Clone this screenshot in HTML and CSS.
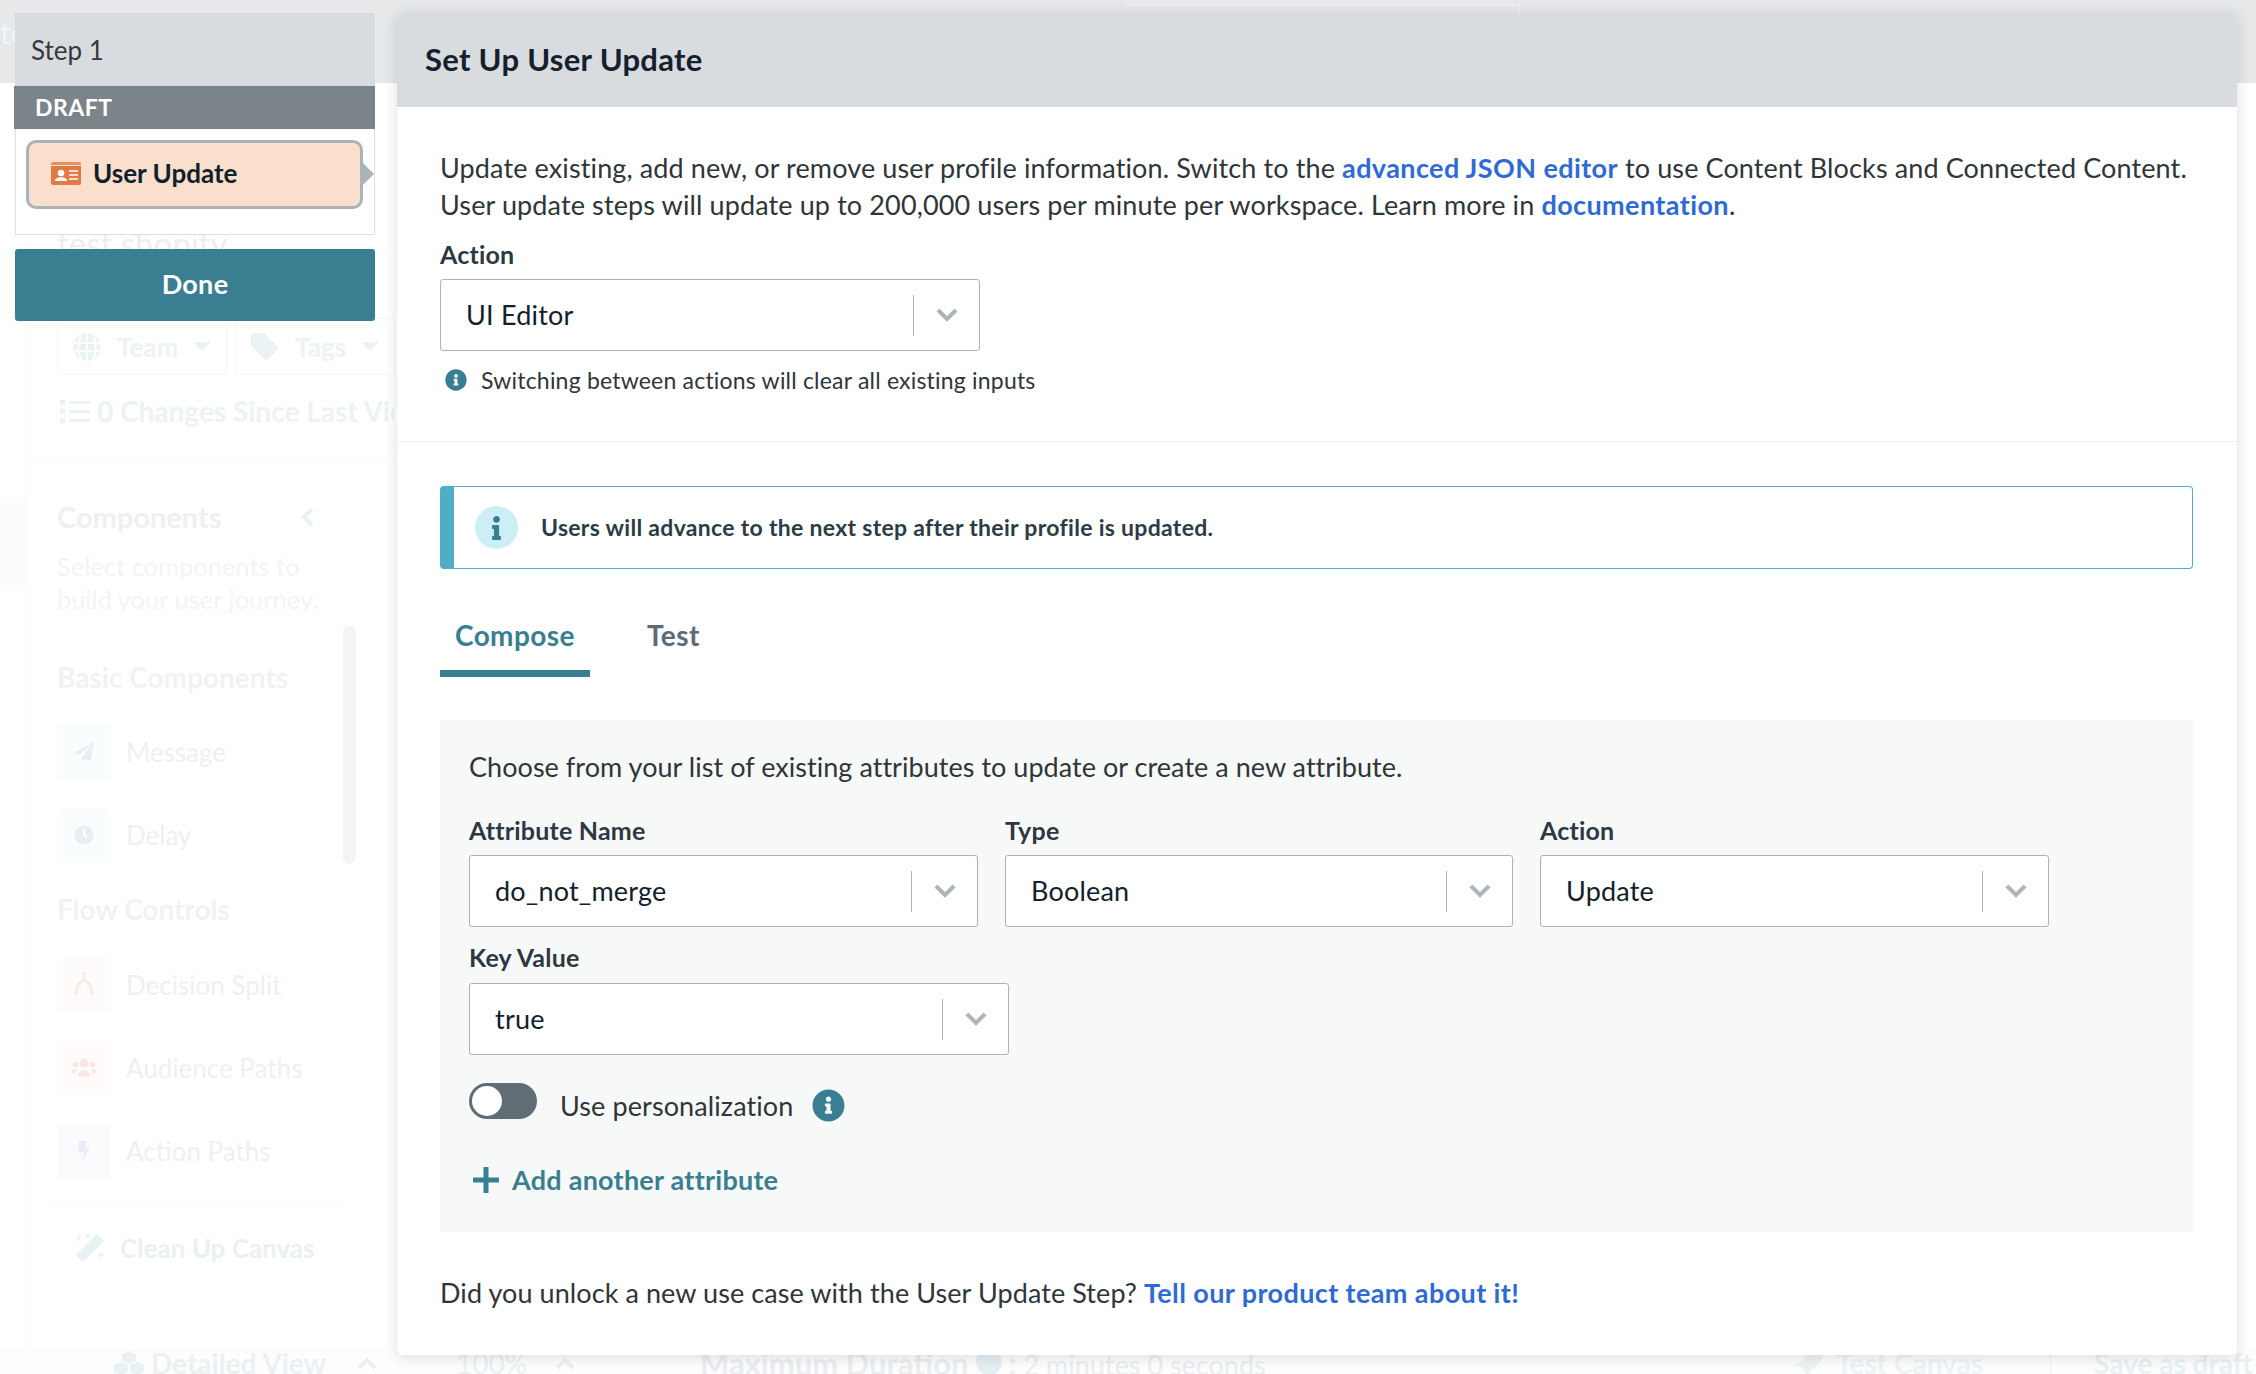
FILE: index.html
```html
<!DOCTYPE html>
<html lang="en">
  <head>
    <title>Set Up User Update</title>
    <meta charset="UTF-8" />
    <link rel="stylesheet" href="styles.css">
  </head>
  <body>
    <!-- faded canvas behind the modal -->
    <div class="page">
      <div class="topbar">
        <span class="topbar-text">to</span>
        <div class="topbar-tab"></div>
      </div>
      <div class="workspace">
        <div class="rail"><div class="rail-mark"></div></div>
        <div class="sidebar">
          <div class="side-head">
            <div class="side-name">test shopify</div>
            <div class="filters">
              <div class="filter filter-team">
                <svg class="filter-icon" viewBox="0 0 24 24"><circle cx="12" cy="12" r="12"/><path d="M0 8.500h24M0 15.500h24M12 0v24M7 1c-3 7-3 15 0 22M17 1c3 7 3 15 0 22" stroke="#fff" stroke-width="1.500" fill="none"/></svg>
                <span>Team</span><i class="caret"></i>
              </div>
              <div class="filter filter-tags">
                <svg class="filter-icon" viewBox="0 0 24 24"><path d="M0 2a2 2 0 0 1 2-2h9l13 13-11 11L0 11z"/></svg>
                <span>Tags</span><i class="caret"></i>
              </div>
            </div>
            <div class="changes">
              <svg class="list-icon" viewBox="0 0 30 24"><path d="M0 1h5v5H0zM0 10h5v5H0zM0 19h5v5H0zM9 2h21v3H9zM9 11h21v3H9zM9 20h21v3H9z"/></svg>
              <span>0 Changes Since Last View</span>
            </div>
          </div>
          <div class="components">
            <div class="comp-title">
              <span>Components</span>
              <svg class="comp-back" viewBox="0 0 14 20"><path d="M11 2 3 10l8 8" fill="none" stroke-width="4"/></svg>
            </div>
            <p class="comp-desc">Select components to<br>build your user journey.</p>
            <div class="comp-scrollbar"></div>
            <h3 class="comp-group">Basic Components</h3>
            <div class="comp-item">
              <div class="tile tile-teal"><svg viewBox="0 0 20 20"><path d="M20 0 17 19l-6-2-3 3v-5L18 3 5 13 0 11z" fill="#e6f0f2"/></svg></div>
              <span>Message</span>
            </div>
            <div class="comp-item">
              <div class="tile tile-teal"><svg viewBox="0 0 20 20"><circle cx="10" cy="10" r="9.500" fill="#e6f0f2"/><path d="M10 4v6l3 3" stroke="#fff" stroke-width="2" fill="none"/></svg></div>
              <span>Delay</span>
            </div>
            <h3 class="comp-group comp-group-flow">Flow Controls</h3>
            <div class="comp-item">
              <div class="tile tile-red"><svg class="icon-split" viewBox="0 0 20 26"><path d="M10 0v8M10 8c-5 2-8 6-8 15M10 8c5 2 8 6 8 15" stroke="#fae6e6" stroke-width="2.500" fill="none"/></svg></div>
              <span>Decision Split</span>
            </div>
            <div class="comp-item">
              <div class="tile tile-orange"><svg class="icon-users" viewBox="0 0 24 18"><circle cx="12" cy="4.500" r="4" fill="#fae6e6"/><circle cx="4" cy="6" r="2.500" fill="#fae6e6"/><circle cx="20" cy="6" r="2.500" fill="#fae6e6"/><path d="M6 17c0-8 12-8 12 0zM0 13c0-3 4-4 5-3l-1 4zM24 13c0-3-4-4-5-3l1 4z" fill="#fae6e6"/></svg></div>
              <span>Audience Paths</span>
            </div>
            <div class="comp-item">
              <div class="tile tile-blue"><svg viewBox="0 0 14 20"><path d="M2 0h8L8 7h5L5 20l2-9H1z" fill="#eaecf6"/></svg></div>
              <span>Action Paths</span>
            </div>
            <div class="cleanup">
              <svg class="wand" viewBox="0 0 30 30"><path d="M22 1 29 8 8 29 1 22z" fill="#e8f1f3"/><path d="M4 1l1 3 3 1-3 1-1 3-1-3-3-1 3-1zM26 18l1 3 3 1-3 1-1 3-1-3-3-1 3-1zM13 0l1 2 2 1-2 1-1 2-1-2-2-1 2-1z" fill="#e8f1f3"/></svg>
              <span>Clean Up Canvas</span>
            </div>
          </div>
        </div>
      </div>
      <div class="footer">
        <div class="detailed">
          <svg class="cubes" viewBox="0 0 30 24"><path d="M15 0l7 3v7l-7 3-7-3V3zM7 11l7 3v7l-7 3-7-3v-7zM23 11l7 3v7l-7 3-7-3v-7z" fill="#e8f1f3"/></svg>
          <span>Detailed View</span>
          <svg class="chev-up" viewBox="0 0 20 14"><path d="M2 12 10 4l8 8" fill="none" stroke-width="4"/></svg>
        </div>
        <div class="zoom-level">
          <span>100%</span>
          <svg class="chev-up" viewBox="0 0 20 14"><path d="M2 12 10 4l8 8" fill="none" stroke-width="4"/></svg>
        </div>
        <div class="duration"><b>Maximum Duration</b><i class="dot"></i><b>:</b> 2 minutes 0 seconds</div>
        <div class="footer-actions">
          <svg class="rocket" viewBox="0 0 30 30"><path d="M30 0c-10 0-17 4-22 13l-8 3 6 3 5 5 3 6 3-8C26 17 30 10 30 0z" fill="#eef4f5"/></svg>
          <b class="test-canvas">Test Canvas</b>
          <b class="save-draft">Save as draft</b>
        </div>
      </div>
    </div>

    <!-- step node, sits above the overlay -->
    <div class="step">
      <div class="step-head">Step 1</div>
      <div class="step-draft">DRAFT</div>
      <div class="step-body">
        <div class="node">
          <svg class="node-icon" viewBox="0 0 30 23">
            <path d="M2 0h26a2 2 0 0 1 2 2v1H0V2a2 2 0 0 1 2-2z" fill="#e8905f"/>
            <path d="M0 4h30v17a2 2 0 0 1-2 2H2a2 2 0 0 1-2-2z" fill="#e07b45"/>
            <circle cx="10" cy="11" r="3.300" fill="#fff"/>
            <path d="M4 19c0-5 12-5 12 0z" fill="#fff"/>
            <path d="M18 8h9v2h-9zM18 12h9v2h-9zM18 16h9v2h-9z" fill="#fbdcc9"/>
          </svg>
          <span>User Update</span>
        </div>
      </div>
      <button class="step-done">Done</button>
    </div>

    <div class="modal">
      <div class="modal-head">Set Up User Update</div>
      <div class="intro">
        <p class="intro-text">Update existing, add new, or remove user profile information. Switch to the <a href="#">advanced JSON editor</a> to use Content Blocks and Connected Content.<br>User update steps will update up to 200,000 users per minute per workspace. Learn more in <a href="#">documentation</a>.</p>
        <label class="field-label">Action</label>
        <div class="select select-action">
          <span class="select-value">UI Editor</span>
          <i class="select-sep"></i>
          <svg class="select-chev" viewBox="0 0 22 14"><path d="M2 2l9 9 9-9" fill="none" stroke-width="4"/></svg>
        </div>
        <div class="hint">
          <svg class="info" viewBox="0 0 512 512"><path d="M256 8C119.043 8 8 119.083 8 256c0 136.997 111.043 248 248 248s248-111.003 248-248C504 119.083 392.957 8 256 8zm0 110c23.196 0 42 18.804 42 42s-18.804 42-42 42-42-18.804-42-42 18.804-42 42-42zm56 254c0 6.627-5.373 12-12 12h-88c-6.627 0-12-5.373-12-12v-24c0-6.627 5.373-12 12-12h12v-64h-12c-6.627 0-12-5.373-12-12v-24c0-6.627 5.373-12 12-12h64c6.627 0 12 5.373 12 12v100h12c6.627 0 12 5.373 12 12v24z"/></svg>
          <span>Switching between actions will clear all existing inputs</span>
        </div>
      </div>
      <div class="editor">
        <div class="alert">
          <div class="alert-icon"><svg viewBox="0 0 192 512"><path d="M20 424.229h20V279.771H20c-11.046 0-20-8.954-20-20V212c0-11.046 8.954-20 20-20h112c11.046 0 20 8.954 20 20v212.229h20c11.046 0 20 8.954 20 20V492c0 11.046-8.954 20-20 20H20c-11.046 0-20-8.954-20-20v-47.771c0-11.046 8.954-20 20-20zM96 0C56.235 0 24 32.235 24 72s32.235 72 72 72 72-32.235 72-72S135.764 0 96 0z"/></svg></div>
          <span class="alert-text">Users will advance to the next step after their profile is updated.</span>
        </div>
        <div class="tabs">
          <div class="tab tab-active">Compose</div>
          <div class="tab">Test</div>
        </div>
        <div class="panel">
          <p class="panel-text">Choose from your list of existing attributes to update or create a new attribute.</p>
          <div class="attr-row">
            <div class="attr-col">
              <label class="field-label">Attribute Name</label>
              <div class="select">
                <span class="select-value">do_not_merge</span>
                <i class="select-sep"></i>
                <svg class="select-chev" viewBox="0 0 22 14"><path d="M2 2l9 9 9-9" fill="none" stroke-width="4"/></svg>
              </div>
            </div>
            <div class="attr-col">
              <label class="field-label">Type</label>
              <div class="select">
                <span class="select-value">Boolean</span>
                <i class="select-sep"></i>
                <svg class="select-chev" viewBox="0 0 22 14"><path d="M2 2l9 9 9-9" fill="none" stroke-width="4"/></svg>
              </div>
            </div>
            <div class="attr-col">
              <label class="field-label">Action</label>
              <div class="select">
                <span class="select-value">Update</span>
                <i class="select-sep"></i>
                <svg class="select-chev" viewBox="0 0 22 14"><path d="M2 2l9 9 9-9" fill="none" stroke-width="4"/></svg>
              </div>
            </div>
          </div>
          <label class="field-label field-label-key">Key Value</label>
          <div class="select select-key">
            <span class="select-value">true</span>
            <i class="select-sep"></i>
            <svg class="select-chev" viewBox="0 0 22 14"><path d="M2 2l9 9 9-9" fill="none" stroke-width="4"/></svg>
          </div>
          <div class="personalize">
            <div class="toggle"><div class="toggle-knob"></div></div>
            <span>Use personalization</span>
            <svg class="info info-large" viewBox="0 0 512 512"><path d="M256 8C119.043 8 8 119.083 8 256c0 136.997 111.043 248 248 248s248-111.003 248-248C504 119.083 392.957 8 256 8zm0 110c23.196 0 42 18.804 42 42s-18.804 42-42 42-42-18.804-42-42 18.804-42 42-42zm56 254c0 6.627-5.373 12-12 12h-88c-6.627 0-12-5.373-12-12v-24c0-6.627 5.373-12 12-12h12v-64h-12c-6.627 0-12-5.373-12-12v-24c0-6.627 5.373-12 12-12h64c6.627 0 12 5.373 12 12v100h12c6.627 0 12 5.373 12 12v24z"/></svg>
          </div>
          <div class="add-attr">
            <svg class="plus" viewBox="0 0 26 26"><path d="M13 1v24M1 13h24" stroke-width="5" stroke-linecap="round" fill="none"/></svg>
            <span>Add another attribute</span>
          </div>
        </div>
        <p class="feedback">Did you unlock a new use case with the User Update Step? <a href="#">Tell our product team about it!</a></p>
      </div>
    </div>
  </body>
</html>
```

FILE: styles.css
```css
* {
  box-sizing: border-box;
}
body {
  margin: 0;
  width: 2256px;
  height: 1374px;
  position: relative;
  overflow: hidden;
  background: #fff;
  font-family: Lato, "Noto Sans", sans-serif;
  color: #2f3538;
}
p {
  margin: 0;
}

/* faded page */
.page {
  height: 1374px;
  display: flex;
  flex-direction: column;
}
.topbar {
  height: 83px;
  background: #e6e8ea;
  position: relative;
  flex: none;
}
.topbar-text {
  display: block;
  padding-top: 14px;
  font-size: 30px;
  color: #f2f4f5;
}
.topbar-tab {
  position: absolute;
  left: 1125px;
  top: 4px;
  width: 395px;
  height: 12px;
  border: 1px solid #f0f1f2;
  border-bottom: none;
}
.workspace {
  flex: 1;
  display: flex;
}
.rail {
  width: 27px;
  border-right: 1px solid #fbfbfb;
  padding-top: 414px;
}
.rail-mark {
  height: 88px;
  background: #fbfdfd;
}
.sidebar {
  width: 370px;
}
.side-head {
  height: 381px;
  padding: 138px 0 0 30px;
  border-bottom: 1px solid #fbfbfb;
}
.side-name {
  font-size: 33px;
  line-height: 44px;
  color: #eceeef;
}
.filters {
  display: flex;
  gap: 8px;
  margin-top: 53px;
}
.filter {
  height: 57px;
  border: 1px solid #f6f8f8;
  border-radius: 3px;
  display: flex;
  align-items: center;
  padding-left: 15px;
  font-size: 26px;
  font-weight: 700;
  color: #ecf3f5;
}
.filter-team {
  width: 170px;
}
.filter-tags {
  width: 160px;
}
.filter-icon {
  width: 28px;
  height: 28px;
  fill: #ecf3f5;
  margin-right: 16px;
  flex: none;
}
.caret {
  border: 9px solid transparent;
  border-top: 9px solid #ecf3f5;
  border-bottom: none;
  margin-left: 15px;
}
.changes {
  display: flex;
  align-items: center;
  margin-top: 19px;
  padding-left: 3px;
  font-size: 28px;
  font-weight: 700;
  color: #ecf3f5;
  white-space: nowrap;
  overflow: hidden;
  width: 337px;
}
.list-icon {
  width: 30px;
  height: 24px;
  fill: #ecf3f5;
  margin-right: 7px;
  flex: none;
}
.components {
  position: relative;
  padding: 35px 0 0 30px;
}
.comp-title {
  display: flex;
  align-items: center;
  font-size: 29px;
  font-weight: 700;
  line-height: 36px;
  color: #eef0f1;
}
.comp-back {
  width: 14px;
  height: 20px;
  margin-left: 79px;
  stroke: #e8f1f3;
}
.comp-desc {
  margin-top: 15px;
  font-size: 25.500px;
  line-height: 33px;
  color: #f3f4f5;
}
.comp-scrollbar {
  position: absolute;
  left: 316px;
  top: 162px;
  width: 13px;
  height: 238px;
  border-radius: 7px;
  background: #f3f4f4;
}
.comp-group {
  margin: 43px 0 30px;
  font-size: 28px;
  line-height: 36px;
  color: #f1f2f3;
}
.comp-group-flow {
  margin: 27px 0 31px;
}
.comp-item {
  height: 54px;
  margin-bottom: 29px;
  display: flex;
  align-items: center;
  gap: 15px;
  font-size: 26px;
  color: #eff0f1;
}
.tile {
  width: 54px;
  height: 54px;
  border-radius: 3px;
  display: flex;
  align-items: center;
  justify-content: center;
}
.tile svg {
  width: 20px;
  height: 20px;
}
.tile .icon-split {
  width: 22px;
  height: 26px;
}
.tile .icon-users {
  width: 26px;
  height: 20px;
}
.tile-teal {
  background: #fafdfd;
}
.tile-red {
  background: #fefbfb;
}
.tile-orange {
  background: #fffbfa;
}
.tile-blue {
  background: #fbfbfe;
}
.cleanup {
  margin: 20px 0 0 -15px;
  width: 303px;
  border-top: 1px solid #fbfbfb;
  padding: 24px 0 0 33px;
  display: flex;
  align-items: center;
  gap: 15px;
  font-size: 26px;
  font-weight: 700;
  color: #e9f1f3;
}
.wand {
  width: 30px;
  height: 30px;
}
.footer {
  height: 24px;
  flex: none;
  display: flex;
  align-items: center;
  background: #fdfdfd;
  border-top: 1px solid #fafafa;
  overflow: hidden;
  font-size: 28px;
  color: #e9f1f3;
}
.detailed {
  width: 456px;
  display: flex;
  align-items: center;
  padding-left: 114px;
  gap: 7px;
  font-weight: 700;
}
.cubes {
  width: 30px;
  height: 24px;
}
.chev-up {
  width: 20px;
  height: 14px;
  stroke: #e9f1f3;
}
.detailed .chev-up {
  margin-left: 24px;
}
.zoom-level {
  width: 244px;
  display: flex;
  align-items: center;
  gap: 28px;
}
.duration {
  width: 1094px;
  font-size: 27px;
  color: #eaeef0;
}
.duration b {
  font-size: 31px;
}
.dot {
  display: inline-block;
  width: 26px;
  height: 26px;
  border-radius: 50%;
  background: #e4eff2;
  margin: 0 7px;
}
.footer-actions {
  display: flex;
  align-items: center;
}
.rocket {
  width: 30px;
  height: 30px;
  margin-right: 12px;
}
.test-canvas {
  padding-right: 67px;
  border-right: 1px solid #eef0f1;
  color: #eef4f5;
}
.save-draft {
  margin-left: 43px;
}

/* step node */
.step {
  position: absolute;
  left: 14px;
  top: 13px;
  width: 361px;
}
.step-head {
  margin-left: 1px;
  height: 73px;
  padding: 0 16px;
  display: flex;
  align-items: center;
  background: #d9dcdf;
  font-size: 26px;
  color: #35393c;
}
.step-draft {
  height: 43px;
  padding: 0 0 2px 21px;
  display: flex;
  align-items: center;
  background: #7a8489;
  font-size: 23px;
  font-weight: 700;
  letter-spacing: 0.5px;
  color: #fff;
}
.step-body {
  margin-left: 1px;
  height: 106px;
  padding: 11px 11px 0 10px;
  background: #fff;
  border: 1px solid #dcdfe1;
  border-top: none;
}
.node {
  position: relative;
  height: 69px;
  display: flex;
  align-items: center;
  gap: 12px;
  padding: 0 0 3px 22px;
  background: #fadfcd;
  border: 3px solid #a9b3b9;
  border-radius: 10px;
  font-size: 26px;
  font-weight: 700;
  color: #10202c;
}
.node::after {
  content: "";
  position: absolute;
  right: -14px;
  top: 20px;
  border-left: 11px solid #a9b3b9;
  border-top: 11px solid transparent;
  border-bottom: 11px solid transparent;
}
.node-icon {
  width: 30px;
  height: 23px;
}
.step-done {
  display: block;
  margin: 14px 0 0 1px;
  width: 360px;
  height: 72px;
  padding-bottom: 4px;
  border: none;
  border-radius: 3px;
  background: #3a7e91;
  color: #fff;
  font-family: inherit;
  font-size: 27px;
  font-weight: 700;
  letter-spacing: 0.3px;
}

/* modal */
.modal {
  position: absolute;
  left: 397px;
  top: 13px;
  width: 1840px;
  height: 1342px;
  background: #fff;
  border-radius: 6px;
  overflow: hidden;
  box-shadow: 0 2px 14px rgba(40, 50, 60, 0.16);
}
.modal-head {
  height: 94px;
  padding: 0 0 3px 28px;
  display: flex;
  align-items: center;
  background: #d9dcdf;
  font-size: 31px;
  font-weight: 700;
  letter-spacing: 0.3px;
  color: #14202c;
}
.intro {
  height: 335px;
  padding: 42px 43px 0;
  border-bottom: 1px solid #eceeef;
}
.intro-text {
  font-size: 27px;
  line-height: 37px;
  letter-spacing: 0.12px;
}
a {
  color: #2f6bd3;
  font-weight: 700;
  letter-spacing: 0.4px;
  text-decoration: none;
}
.field-label {
  display: block;
  font-size: 25px;
  font-weight: 700;
  line-height: 30px;
  letter-spacing: 0.2px;
  color: #2d3842;
}
.intro .field-label {
  margin-top: 16px;
}
.select {
  height: 72px;
  margin-top: 10px;
  position: relative;
  display: flex;
  align-items: center;
  padding-left: 25px;
  background: #fff;
  border: 1px solid #a9b3b9;
  border-radius: 3px;
  font-size: 27px;
  letter-spacing: 0.2px;
  color: #14202c;
}
.select-value {
  flex: 1;
  padding-bottom: 2px;
}
.select-sep {
  width: 1px;
  height: 41px;
  background: #a9b3b9;
}
.select-chev {
  width: 22px;
  height: 14px;
  margin: 0 21px 0 22px;
  stroke: #acb5ba;
}
.select-action {
  width: 540px;
}
.hint {
  display: flex;
  align-items: center;
  gap: 14px;
  margin-top: 14px;
  padding-left: 5px;
  font-size: 23px;
  line-height: 30px;
  letter-spacing: 0.2px;
}
.info {
  width: 22px;
  height: 22px;
  fill: #3a7e91;
  flex: none;
}
.editor {
  padding: 44px 43px 0;
}
.alert {
  height: 83px;
  width: 1753px;
  display: flex;
  align-items: center;
  gap: 23px;
  padding-left: 21px;
  border: 1px solid #4fadc6;
  border-left-width: 14px;
  border-radius: 4px;
  font-size: 23px;
  font-weight: 700;
  letter-spacing: 0.3px;
  color: #2d3b47;
}
.alert-text {
  padding-bottom: 2px;
}
.alert-icon {
  width: 43px;
  height: 43px;
  border-radius: 50%;
  background: #cdeef5;
  display: flex;
  align-items: center;
  justify-content: center;
}
.alert-icon svg {
  width: 9px;
  height: 24px;
  fill: #3a7e91;
}
.tabs {
  display: flex;
  margin-top: 45px;
}
.tab {
  height: 63px;
  padding: 3px 15px 0;
  margin-right: 42px;
  font-size: 28px;
  font-weight: 700;
  line-height: 36px;
  letter-spacing: 0.4px;
  color: #5c6b75;
}
.tab-active {
  width: 150px;
  color: #3a7e91;
  border-bottom: 7px solid #3a7e91;
  white-space: nowrap;
}
.panel {
  width: 1753px;
  height: 512px;
  margin-top: 43px;
  padding: 29px 29px 0;
  background: #f7f9f9;
}
.panel-text {
  font-size: 27px;
  line-height: 36px;
  letter-spacing: 0.04px;
}
.attr-row {
  display: grid;
  grid-template-columns: 509px 508px 509px;
  gap: 27px;
  margin-top: 30px;
}
.field-label-key {
  margin-top: 15px;
}
.select-key {
  width: 540px;
  margin-top: 11px;
}
.personalize {
  display: flex;
  align-items: flex-start;
  margin-top: 28px;
  font-size: 27px;
  line-height: 36px;
  letter-spacing: 0.1px;
}
.personalize span {
  padding-top: 5px;
}
.toggle {
  width: 68px;
  height: 36px;
  border-radius: 18px;
  background: #616d75;
  padding: 3px;
  margin-right: 23px;
}
.toggle-knob {
  width: 30px;
  height: 30px;
  border-radius: 50%;
  background: #fff;
}
.info-large {
  width: 33px;
  height: 33px;
  margin: 6px 0 0 19px;
}
.add-attr {
  display: flex;
  align-items: center;
  gap: 13px;
  margin-top: 39px;
  padding-left: 4px;
  font-size: 27px;
  font-weight: 700;
  letter-spacing: 0.25px;
  color: #3a7e91;
}
.plus {
  width: 26px;
  height: 26px;
  stroke: #3a7e91;
}
.feedback {
  margin-top: 43px;
  font-size: 27px;
  line-height: 36px;
  letter-spacing: 0.08px;
}
```
